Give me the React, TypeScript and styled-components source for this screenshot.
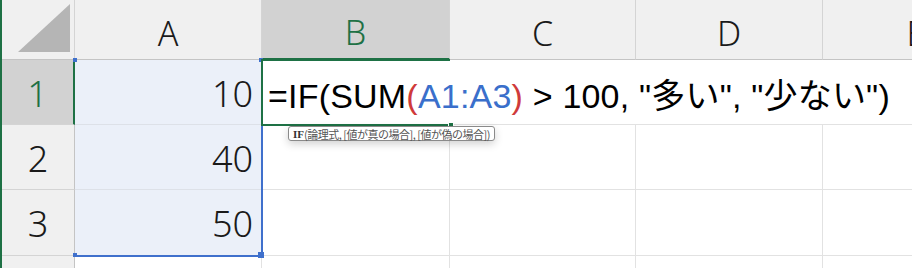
import styled, { createGlobalStyle, css } from 'styled-components';

const GlobalStyle = createGlobalStyle`
  html, body {
    margin: 0;
    padding: 0;
    background: #ffffff;
    overflow: hidden;
  }
  * {
    box-sizing: border-box;
  }
`;

const GREEN = '#1e7145';
const BLUE = '#3f70cc';

type Pos = { $r: number; $c: number };

const place = css<Pos>`
  grid-row: ${(p) => p.$r};
  grid-column: ${(p) => p.$c};
`;

const Viewport = styled.div`
  width: 912px;
  height: 268px;
  overflow: hidden;
  border-left: 2px solid ${GREEN};
`;

const Sheet = styled.div`
  position: relative;
  display: grid;
  grid-template-columns: 73px 187px 188px 186px 187px 187px;
  grid-template-rows: 60px 65px 65px 66px 40px;
  width: max-content;
  font-family: 'Noto Sans', 'Liberation Sans', sans-serif;
  color: #1a1a1a;
`;

const Corner = styled.div`
  grid-row: 1;
  grid-column: 1;
  background: #f0f0f0;
  border-right: 1px solid #d4d4d4;
  border-bottom: 1px solid #c4c4c4;
  display: flex;
  align-items: flex-end;
  justify-content: flex-end;
  padding: 0 4px 7px 0;
`;

const ColHeader = styled.div<Pos & { $active?: boolean }>`
  ${place};
  background: ${(p) => (p.$active ? '#d2d2d2' : '#f0f0f0')};
  border-right: 1px solid #d4d4d4;
  border-bottom: ${(p) => (p.$active ? `2px solid ${GREEN}` : '1px solid #c4c4c4')};
  color: ${(p) => (p.$active ? GREEN : '#1a1a1a')};
  display: flex;
  align-items: center;
  justify-content: center;
  padding-top: 6px;
  font-size: 34px;
  font-weight: 300;
`;

const RowHeader = styled.div<Pos & { $active?: boolean }>`
  ${place};
  background: ${(p) => (p.$active ? '#d2d2d2' : '#f0f0f0')};
  border-right: ${(p) => (p.$active ? `2px solid ${GREEN}` : '1px solid #c4c4c4')};
  border-bottom: 1px solid #d4d4d4;
  color: ${(p) => (p.$active ? GREEN : '#1a1a1a')};
  display: flex;
  align-items: center;
  justify-content: center;
  padding-top: 2px;
  font-size: 36px;
  font-weight: 300;
`;

const Cell = styled.div<Pos & { $selected?: boolean; $noRight?: boolean }>`
  ${place};
  background: ${(p) => (p.$selected ? '#ebf0f9' : '#ffffff')};
  border-right: ${(p) => (p.$noRight ? 'none' : '1px solid #e2e2e2')};
  border-bottom: 1px solid ${(p) => (p.$selected ? '#dde1e8' : '#e2e2e2')};
  display: flex;
  align-items: center;
  justify-content: flex-end;
  padding: 2px 8px 0 0;
  font-size: 36px;
  font-weight: 300;
`;

const ActiveCell = styled.div`
  grid-row: 2;
  grid-column: 3;
  position: relative;
  z-index: 2;
  margin: -1px 0 -1px -1px;
  background: #ffffff;
  border: 2px solid ${GREEN};
  border-right: none;
  display: flex;
  align-items: center;
  padding: 0 0 0 5px;
  white-space: nowrap;
  overflow: visible;
`;

const Formula = styled.span`
  font-family: 'Liberation Sans', 'Noto Sans CJK JP', sans-serif;
  font-size: 34px;
  letter-spacing: 0.2px;
  color: #000000;
  padding-top: 2px;
`;

const Paren = styled.span`
  color: #cf3a3a;
`;

const Ref = styled.span`
  color: #3a6fcb;
`;

const FillHandle = styled.span`
  position: absolute;
  left: 185px;
  bottom: -4px;
  width: 6px;
  height: 6px;
  background: ${GREEN};
  border: 1px solid #ffffff;
`;

const Tooltip = styled.div`
  position: absolute;
  left: 25px;
  top: calc(100% + 2px);
  height: 15px;
  padding: 0 4px;
  display: flex;
  align-items: center;
  background: #ffffff;
  border: 1px solid #8a8a8a;
  border-radius: 3px;
  box-shadow: 0 3px 8px rgba(0, 0, 0, 0.18);
  font-family: 'Noto Sans CJK JP', sans-serif;
  font-size: 11px;
  color: #555555;
  letter-spacing: -0.5px;
`;

const TipName = styled.b`
  font-family: 'Liberation Serif', serif;
  font-weight: 700;
  color: #333333;
  letter-spacing: 0;
`;

const RangeFrame = styled.div`
  grid-column: 2;
  grid-row: 2 / 5;
  position: relative;
  pointer-events: none;
  border-right: 2px solid ${BLUE};
  border-bottom: 2px solid ${BLUE};
  margin: 0 -1px -1px 0;
  z-index: 1;
`;

const Knob = styled.span<{ $size: number; $x: 'left' | 'right'; $y: 'top' | 'bottom' }>`
  position: absolute;
  width: ${(p) => p.$size}px;
  height: ${(p) => p.$size}px;
  background: ${BLUE};
  ${(p) => p.$x}: -${(p) => Math.ceil(p.$size / 2)}px;
  ${(p) => p.$y}: -${(p) => Math.ceil(p.$size / 2)}px;
`;

const columns = ['A', 'B', 'C', 'D', 'E'];
const values = [10, 40, 50];

function CornerTriangle() {
  return (
    <svg width="52" height="48" viewBox="0 0 52 48">
      <polygon points="0,48 52,0 52,48" fill="#b5b5b5" />
    </svg>
  );
}

export default function App() {
  return (
    <>
      <GlobalStyle />
      <Viewport>
        <Sheet>
          <Corner>
            <CornerTriangle />
          </Corner>
          {columns.map((c, i) => (
            <ColHeader key={c} $r={1} $c={i + 2} $active={c === 'B'}>
              {c}
            </ColHeader>
          ))}

          <RowHeader $r={2} $c={1} $active>
            1
          </RowHeader>
          <Cell $r={2} $c={2} $selected>
            {values[0]}
          </Cell>
          <ActiveCell>
            <Formula>
              =IF(SUM<Paren>(</Paren>
              <Ref>A1:A3</Ref>
              <Paren>)</Paren> &gt; 100, "多い", "少ない")
            </Formula>
            <FillHandle />
            <Tooltip>
              <TipName>IF</TipName>(論理式, [値が真の場合], [値が偽の場合])
            </Tooltip>
          </ActiveCell>
          <Cell $r={2} $c={4} $noRight />
          <Cell $r={2} $c={5} $noRight />
          <Cell $r={2} $c={6} $noRight />

          {[3, 4, 5].map((r) => (
            <div key={r} style={{ display: 'contents' }}>
              <RowHeader $r={r} $c={1}>{r <= 4 ? r - 1 : ''}</RowHeader>
              <Cell $r={r} $c={2} $selected={r <= 4}>
                {values[r - 2]}
              </Cell>
              <Cell $r={r} $c={3} />
              <Cell $r={r} $c={4} />
              <Cell $r={r} $c={5} />
              <Cell $r={r} $c={6} />
            </div>
          ))}

          <RangeFrame>
            <Knob $size={4} $x="left" $y="top" />
            <Knob $size={4} $x="right" $y="top" />
            <Knob $size={4} $x="left" $y="bottom" />
            <Knob $size={6} $x="right" $y="bottom" />
          </RangeFrame>
        </Sheet>
      </Viewport>
    </>
  );
}
